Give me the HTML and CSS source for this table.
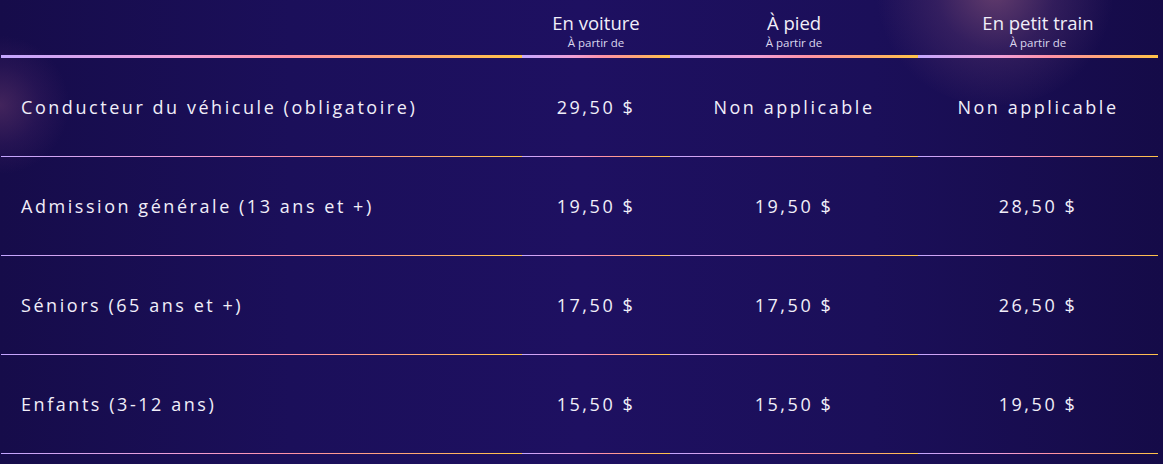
FILE: index.html
```html
<!DOCTYPE html>
<html lang="fr">
<head>
<meta charset="utf-8">
<title>Tarifs</title>
<link rel="stylesheet" href="styles.css">
</head>
<body>
<div class="page">
  <div class="glow glow-left"></div>
  <div class="glow glow-top"></div>
  <div class="table">
    <div class="cell head first"></div>
    <div class="cell head"><span class="title">En voiture</span><span class="sub">À partir de</span></div>
    <div class="cell head"><span class="title">À pied</span><span class="sub">À partir de</span></div>
    <div class="cell head"><span class="title">En petit train</span><span class="sub">À partir de</span></div>

    <div class="cell label">Conducteur du véhicule (obligatoire)</div>
    <div class="cell">29,50 $</div>
    <div class="cell">Non applicable</div>
    <div class="cell">Non applicable</div>

    <div class="cell label">Admission générale (13 ans et +)</div>
    <div class="cell">19,50 $</div>
    <div class="cell">19,50 $</div>
    <div class="cell">28,50 $</div>

    <div class="cell label">Séniors (65 ans et +)</div>
    <div class="cell">17,50 $</div>
    <div class="cell">17,50 $</div>
    <div class="cell">26,50 $</div>

    <div class="cell label">Enfants (3-12 ans)</div>
    <div class="cell">15,50 $</div>
    <div class="cell">15,50 $</div>
    <div class="cell">19,50 $</div>
  </div>
</div>
</body>
</html>
```

FILE: styles.css
```css
html, body {
  margin: 0;
  padding: 0;
  height: 100%;
}
body {
  background: #1a0e55;
  font-family: "Open Sans", "Noto Sans", sans-serif;
  color: #f1eef9;
  overflow: hidden;
}
.page {
  position: relative;
  height: 464px;
  padding: 0 5px 0 1px;
  background:
    linear-gradient(90deg, #160c4a 0%, #1b0f5a 25%, #1e1061 50%, #1b0f59 75%, #150b48 100%);
  overflow: hidden;
}
.glow {
  position: absolute;
  border-radius: 50%;
  pointer-events: none;
}
.glow-left {
  left: -70px;
  top: 35px;
  width: 140px;
  height: 140px;
  background: radial-gradient(circle, rgba(110, 60, 110, 0.5) 0%, rgba(90, 45, 110, 0.22) 40%, rgba(40, 20, 90, 0) 70%);
}
.glow-top {
  left: 870px;
  top: -125px;
  width: 250px;
  height: 230px;
  background: radial-gradient(circle, rgba(130, 80, 120, 0.7) 0%, rgba(100, 60, 115, 0.35) 35%, rgba(40, 20, 90, 0) 70%);
}
.table {
  position: relative;
  display: grid;
  grid-template-columns: 521px 148px 248px 240px;
  grid-auto-rows: 99px;
  grid-template-rows: 58px;
}
.cell {
  display: flex;
  align-items: center;
  justify-content: center;
  font-size: 18px;
  letter-spacing: 2.55px;
  border-bottom: 1px solid transparent;
  border-image: linear-gradient(90deg, #c3a6ff 0%, #f19fd6 35%, #ff92a6 55%, #ffa774 78%, #ffc447 100%) 1;
}
.cell.head {
  flex-direction: column;
  justify-content: flex-start;
  padding-top: 10px;
  border-bottom-width: 3px;
  letter-spacing: 0;
}
.cell.label {
  justify-content: flex-start;
  padding-left: 20px;
}
.title {
  font-size: 18.5px;
  line-height: 25px;
}
.sub {
  font-size: 11.5px;
  line-height: 16px;
  color: #dcd7ee;
}
```
